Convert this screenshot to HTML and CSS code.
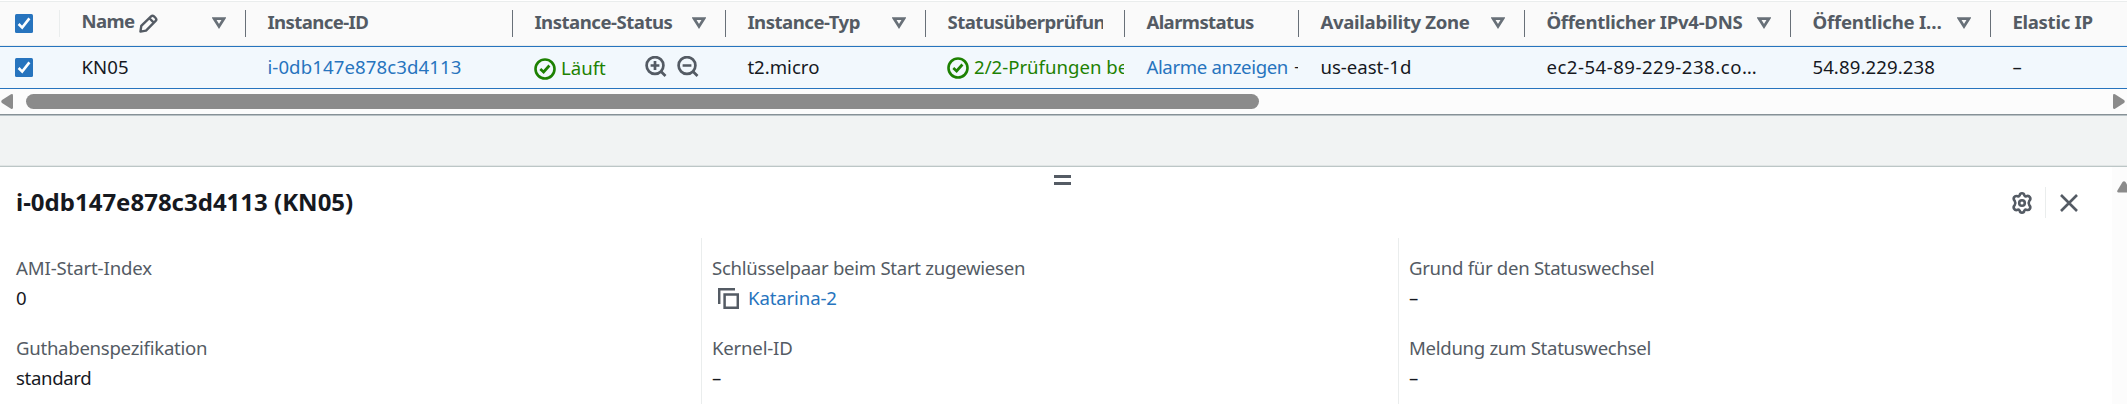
FILE: index.html
```html
<!DOCTYPE html>
<html lang="de">
<head>
<meta charset="utf-8">
<title>EC2-Instances</title>
<link rel="stylesheet" href="styles.css">
</head>
<body>
<svg class="defs" width="0" height="0">
  <symbol id="tri" viewBox="0 0 14 12"><path d="M2 1.600h10L7 9.400z" fill="none" stroke="#687078" stroke-width="2.700"/></symbol>
  <symbol id="ok" viewBox="0 0 22 22"><circle cx="11" cy="11" r="9.500" fill="none" stroke="#1d8102" stroke-width="2.600"/><path d="M6.300 11l3.300 3 5.800-6.500" fill="none" stroke="#1d8102" stroke-width="2.700"/></symbol>
  <symbol id="check" viewBox="0 0 18 19"><rect width="18" height="19" rx="1.500" fill="#2774be"/><path d="M3.600 10l3.600 3.600 7.200-9.200" fill="none" stroke="#fff" stroke-width="2.600"/></symbol>
</svg>
<section class="table">
  <div class="row head">
    <div class="cell pick"><svg class="box"><use href="#check"/></svg></div>
    <div class="cell"><span class="name ls-60">Name</span><svg class="pen" viewBox="0 0 20 20"><path d="M1.500 18.500l.9-5.900L12.700 2.500q1.500-1.500 3.100 0l1.700 1.700q1.500 1.500 0 3.100L7.400 17.500zM11 4.500l4.500 4.500" fill="none" stroke="#545b64" stroke-width="2.500" stroke-linejoin="round"/></svg><svg class="tri"><use href="#tri"/></svg></div>
    <div class="cell"><span class="ls-60">Instance-ID</span></div>
    <div class="cell"><span class="ls-50">Instance-Status</span><svg class="tri"><use href="#tri"/></svg></div>
    <div class="cell"><span class="ls-50">Instance-Typ</span><svg class="tri"><use href="#tri"/></svg></div>
    <div class="cell"><span class="clip ls-50">Statusüberprüfung</span></div>
    <div class="cell"><span class="ls-60">Alarmstatus</span></div>
    <div class="cell"><span class="ls-30">Availability Zone</span><svg class="tri"><use href="#tri"/></svg></div>
    <div class="cell"><span class="ls-30">Öffentlicher IPv4-DNS</span><svg class="tri"><use href="#tri"/></svg></div>
    <div class="cell"><span class="ls-20">Öffentliche I…</span><svg class="tri"><use href="#tri"/></svg></div>
    <div class="cell"><span class="ls-30">Elastic IP</span></div>
  </div>
  <div class="row data">
    <div class="cell pick"><svg class="box"><use href="#check"/></svg></div>
    <div class="cell"><span class="ls10">KN05</span></div>
    <div class="cell"><a class="link ls10">i-0db147e878c3d4113</a></div>
    <div class="cell status"><svg class="ok"><use href="#ok"/></svg><span>Läuft</span>
      <div class="magnify">
        <svg viewBox="0 0 22 22"><circle cx="10" cy="9.500" r="8.400"/><path d="M16 15.500l4.500 4.500M5.600 9.500h8.800M10 5.100v8.800"/></svg>
        <svg viewBox="0 0 22 22"><circle cx="10" cy="9.500" r="8.400"/><path d="M16 15.500l4.500 4.500M5.600 9.500h8.800"/></svg>
      </div>
    </div>
    <div class="cell"><span>t2.micro</span></div>
    <div class="cell checks"><svg class="ok"><use href="#ok"/></svg><span>2/2-Prüfungen bestanden</span></div>
    <div class="cell alarms"><a class="link ls-35">Alarme anzeigen</a><span class="plus">+</span></div>
    <div class="cell"><span>us-east-1d</span></div>
    <div class="cell"><span class="ls50">ec2-54-89-229-238.co…</span></div>
    <div class="cell"><span class="ls10">54.89.229.238</span></div>
    <div class="cell"><span>–</span></div>
  </div>
</section>
<div class="scrollbar">
  <svg class="arrow" viewBox="0 0 12 15"><path d="M12 1.500v12q0 2-2 1.200L1 9Q-.5 7.500 1 6L10 .3q2-.8 2 1.200z"/></svg>
  <div class="track"><div class="thumb"></div></div>
  <svg class="arrow" viewBox="0 0 12 15"><path d="M0 1.500v12q0 2 2 1.200L11 9q1.500-1.500 0-3L2 .3Q0-.5 0 1.500z"/></svg>
</div>
<section class="panel">
  <div class="content">
    <div class="grip"><i></i><i></i></div>
    <header class="bar">
      <h2 class="title">i-0db147e878c3d4113 (KN05)</h2>
      <svg class="gear" viewBox="0 0 22 22"><path d="M8.600 3.500Q9 1.300 11 1.300T13.400 3.500Q14 4.700 15.300 4.200Q17.700 3.300 18.900 5.200T18.300 8.900Q17 11 18.300 13.100Q20 15 18.900 16.800T15.300 17.800Q14 17.300 13.400 18.500Q13 20.700 11 20.700T8.600 18.500Q8 17.300 6.700 17.800Q4.300 18.700 3.100 16.800T3.700 13.100Q5 11 3.700 8.900Q2 7 3.100 5.200T6.700 4.200Q8 4.700 8.600 3.500z"/><circle cx="11" cy="11" r="2.800"/></svg>
      <span class="rule"></span>
      <svg class="close" viewBox="0 0 18 18"><path d="M1 1l16 16M17 1L1 17"/></svg>
    </header>
    <div class="details">
      <dl>
        <dt class="ls-13">AMI-Start-Index</dt><dd>0</dd>
        <dt class="ls-28">Guthabenspezifikation</dt><dd class="ls-35">standard</dd>
      </dl>
      <dl>
        <dt class="ls-28">Schlüsselpaar beim Start zugewiesen</dt>
        <dd class="pair"><svg class="copy" viewBox="0 0 21 21"><path d="M1.200 16V1.200H17M6.600 6.600h13.200v13.200H6.600z"/></svg><a class="link ls-13">Katarina-2</a></dd>
        <dt class="ls-20">Kernel-ID</dt><dd>–</dd>
      </dl>
      <dl>
        <dt class="ls-30">Grund für den Statuswechsel</dt><dd>–</dd>
        <dt class="ls-30">Meldung zum Statuswechsel</dt><dd>–</dd>
      </dl>
    </div>
  </div>
  <div class="vscroll"><svg viewBox="0 0 14 12"><path d="M5.500 1Q7 -.5 8.500 1L13.600 9.500Q14 11.500 12.500 11.500H1.500Q0 11.500.4 9.500z"/></svg></div>
</section>
</body>
</html>
```
FILE: styles.css
```css
* { box-sizing: border-box; }
body { margin: 0; height: 404px; overflow: hidden; background: #f1f3f3; font: 18.6px/24px "Noto Sans", sans-serif; color: #16191f; }
svg { flex: none; }
.defs { position: absolute; }
.link { color: #2774be; }

/* Tracking steps, in hundredths of a pixel */
.ls-60 { letter-spacing: -.6px; }
.ls-50 { letter-spacing: -.5px; }
.ls-35 { letter-spacing: -.35px; }
.ls-30 { letter-spacing: -.3px; }
.ls-28 { letter-spacing: -.28px; }
.ls-20 { letter-spacing: -.2px; }
.ls-13 { letter-spacing: -.13px; }
.ls10 { letter-spacing: .1px; }
.ls50 { letter-spacing: .5px; }

.table { padding-top: 1px; background: #fff; }
.row { display: grid; grid-template-columns: 60px 186px 267px 213px 200px 199px 174px 226px 266px 200px 136px; }
.cell { display: flex; align-items: center; min-width: 0; padding-left: 21.4px; white-space: nowrap; }
.head { height: 45px; padding: 8px 0 7px; border-top: 1px solid #eaeded; border-bottom: 1px solid #eaeded; background: #fafafa; color: #545b64; font-weight: 700; }
.head .cell { height: 27px; border-right: 1px solid #687078; }
.head .cell:last-child { border-right: 0; }
.head .pick { border-color: #eaeded; }
.head span { margin-top: -3px; }
.head .name { margin-top: -5px; }
.cell.pick { padding-left: 15px; }
.box { width: 18px; height: 19px; }
.pen { width: 19px; height: 19px; margin-left: 5px; }
.tri { width: 14px; height: 12px; margin: -1px 19px 0 auto; }
.clip { width: 156px; overflow: hidden; }
.data { height: 43px; border: solid #2774be; border-width: 1px 0; background: #f2f8fd; }
.data span, .data a { margin-top: -2px; }
.ok { width: 22px; height: 22px; margin-right: 5px; }
.status, .checks { color: #1d8102; }
.cell.status, .cell.checks { padding-left: 21px; }
.cell.status { padding-top: 2px; }
.checks, .alarms { overflow: hidden; margin-right: 1px; }
.magnify { display: flex; gap: 10px; margin: 0 0 3px 39.5px; }
.magnify svg { width: 22px; height: 22px; fill: none; stroke: #545b64; stroke-width: 2.7; }
.plus { margin-left: 6px; color: #16191f; }

.scrollbar { display: flex; align-items: center; height: 27px; padding: 0 2px 2px 1px; border-bottom: 1px solid #b9c2c6; background: #fcfcfc; box-shadow: inset 0 -1px #879196; }
.arrow { width: 12px; height: 15px; fill: #8b8b8b; }
.track { flex: 1; padding-left: 13px; }
.thumb { width: 1233px; height: 15px; border-radius: 8px; background: #8b8b8b; }

.panel { display: flex; height: 239px; margin-top: 49px; border-top: 1px solid #e1e5e5; background: #fff; }
.content { flex: 1; border-top: 1px solid #bcc6c6; }
.vscroll { width: 15px; padding: 14px 0 0 5px; border-top: 1px solid #bcc6c6; background: #fcfcfc; overflow: hidden; }
.vscroll svg { display: block; width: 14px; height: 12px; fill: #8b8b8b; }
.grip { display: grid; gap: 4px; width: 17px; margin: 8px 0 0 1054px; }
.grip i { height: 3px; background: #545b64; }
.bar { display: flex; align-items: center; height: 31px; margin-top: 2px; padding: 0 34px 0 16px; }
.title { flex: 1; margin: -3px 0 0; font-size: 24px; line-height: 31px; }
.gear, .close { fill: none; stroke: #545b64; stroke-width: 2.6; }
.gear { width: 22px; height: 22px; }
.rule { width: 1px; height: 31px; margin: 0 14px 0 12px; background: #eaeded; }
.close { width: 18px; height: 18px; }
.details { display: grid; grid-template-columns: 701px 697px 1fr; height: 166px; margin-top: 20px; }
dl { margin: 0; padding: 18px 0 0 16px; }
dl + dl { padding-left: 10px; border-left: 1px solid #eaeded; }
dt { height: 24px; margin-bottom: 6px; color: #545b64; }
dd { height: 24px; margin: 0 0 26px; }
.pair { display: flex; align-items: center; }
.copy { width: 21px; height: 21px; margin: 0 9px 0 6px; fill: none; stroke: #545b64; stroke-width: 2.5; }
```
